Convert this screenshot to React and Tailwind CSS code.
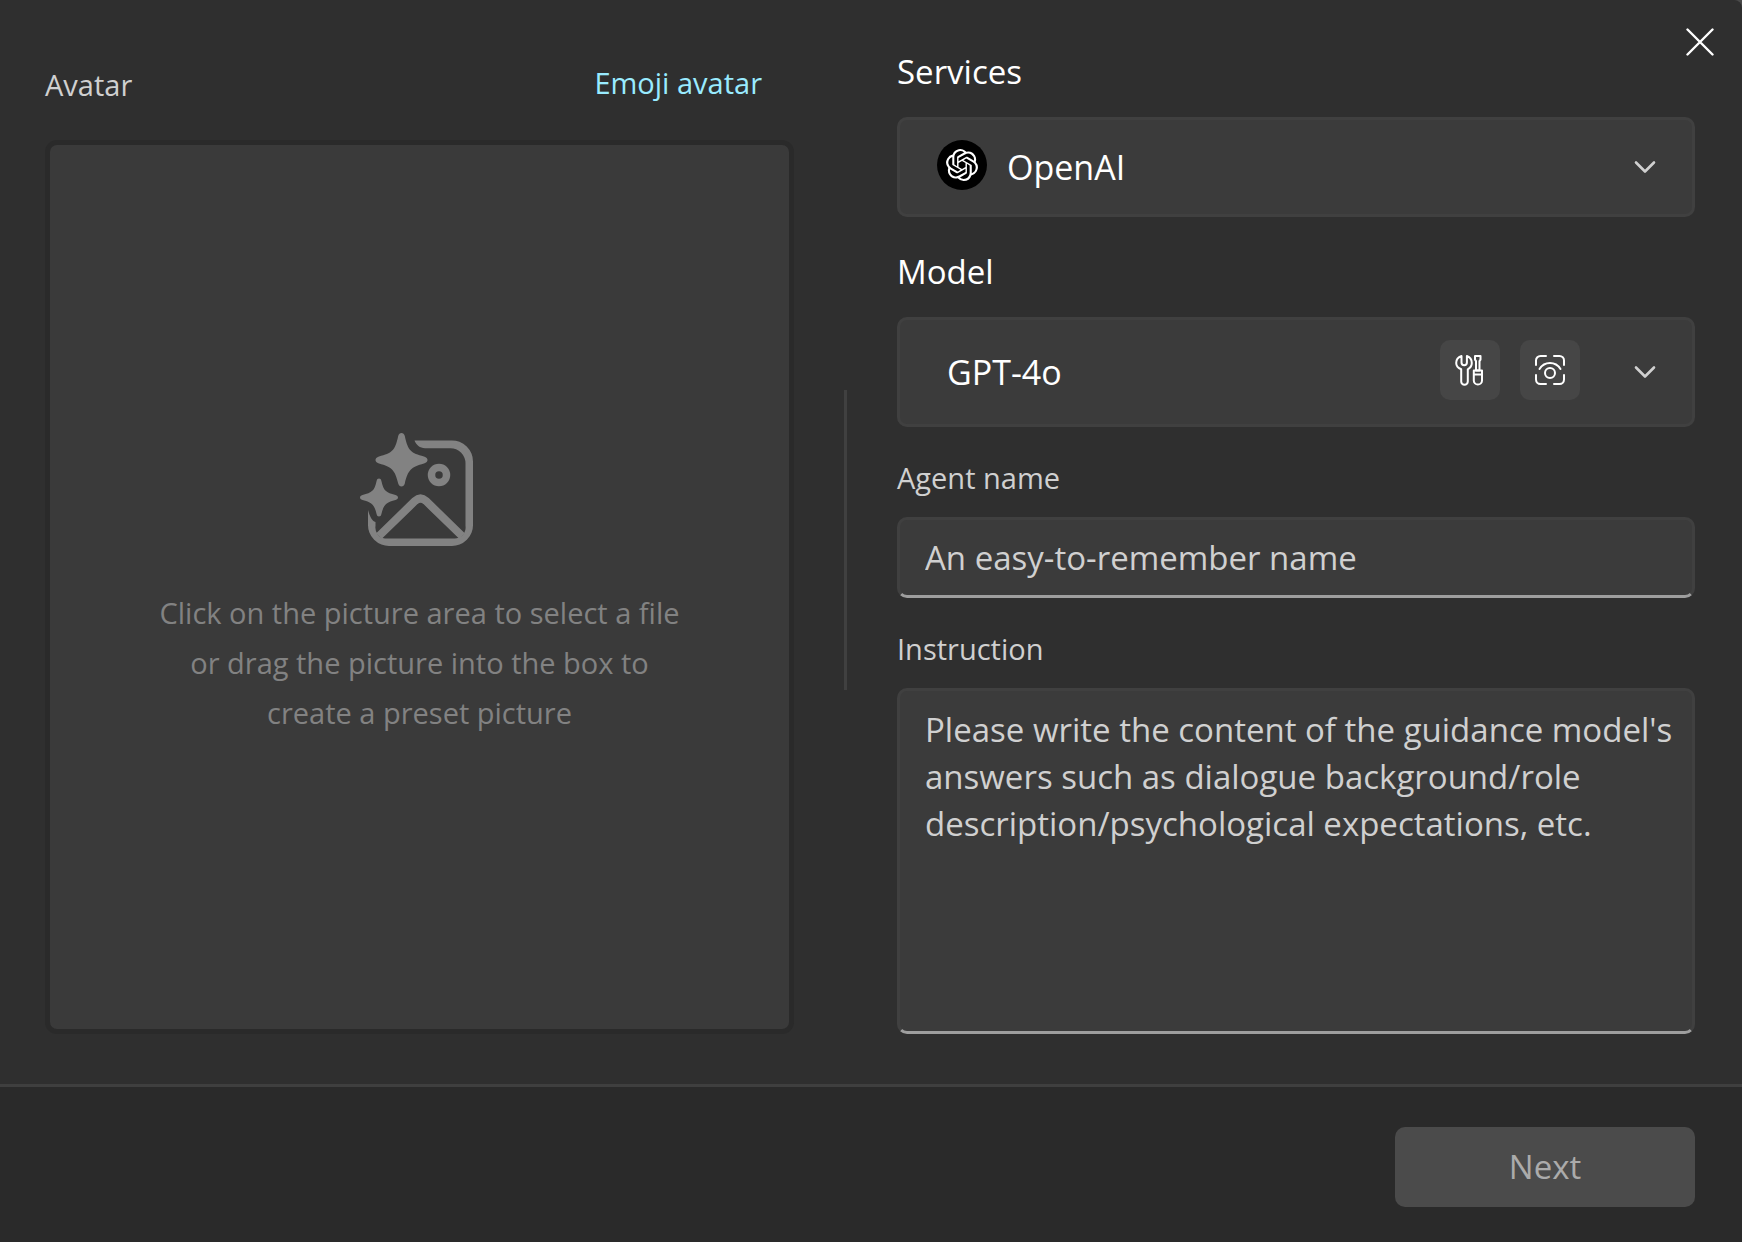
import { SiOpenai } from "react-icons/si";

const labelText = "text-[29px] leading-[38px] text-[#d0d0d0]";
const headText = "text-[33px] leading-12 text-white";
const panel = "rounded-[10px] border-3 border-[#404040] bg-[#3b3b3b]";

function Chevron() {
  return (
    <svg className="pointer-events-none h-5 w-6 shrink-0" viewBox="0 0 24 20" fill="none" stroke="#d0d0d0" strokeWidth="2.6" strokeLinecap="round" strokeLinejoin="round" aria-hidden="true">
      <path d="M3 5.5 12 14.5 21 5.5" />
    </svg>
  );
}

function ToolsIcon() {
  return (
    <svg className="size-8" viewBox="0 0 32 32" fill="none" stroke="#fff" strokeWidth="2" strokeLinejoin="round" aria-hidden="true">
      <path d="M7.500 2V8.500a2.700 2.700 0 0 0 5.400 0V2C15.900 3 17.800 5.600 17.800 9c0 3-1.600 5-4 6.300V27.500a3.300 3.300 0 0 1-6.600 0V15.300C4 14 2.200 11.800 2.200 9c0-3.400 2.200-6 5.300-7Z" />
      <path d="M21 2h5.500v3.600l-1 1.500v9.400h-3.500V7.100l-1-1.500Z" />
      <path d="M19.800 16.500h8.200v10a4.100 4.100 0 0 1-8.200 0ZM19.800 20.500h8.200" />
    </svg>
  );
}

function VisionIcon() {
  return (
    <svg className="size-8" viewBox="0 0 32 32" fill="none" stroke="#fff" strokeWidth="2" strokeLinecap="round" aria-hidden="true">
      <path d="M2 11V6.500a4.500 4.500 0 0 1 4.500-4.500H12M20 2h5.500a4.500 4.500 0 0 1 4.500 4.500V11M30 21v4.500a4.500 4.500 0 0 1-4.500 4.500H20M12 30H6.500a4.500 4.500 0 0 1-4.500-4.500V21" />
      <path d="M5.500 15C8 11 11.700 9 16 9s8 2 10.500 6" />
      <circle cx="16" cy="19" r="5" />
    </svg>
  );
}

function PictureIcon() {
  return (
    <svg className="mr-1 h-[116px] w-[116px]" viewBox="0 0 116 116" fill="none" aria-hidden="true">
      <path d="M54.500 8.500H91A21 21 0 0 1 113 30V92A21 21 0 0 1 91 114H30A21 21 0 0 1 8 92V78C10 85 12 89 15.500 90V94A11 11 0 0 0 25 106.500H94A11 11 0 0 0 105.500 94V32A15 15 0 0 0 90 16.300H65C60 16 56 13 54.500 8.500Z" fill="#828282" />
      <path d="M19 104 55 69Q60.500 64 66 69L102 104" stroke="#828282" strokeWidth="8" />
      <circle cx="79" cy="43" r="7.500" stroke="#828282" strokeWidth="7.500" />
      <path d="M41.500 1C43 1 44.300 2 44.800 4C48 19 51 21 64 24.500C66.500 25.200 67.500 26.500 67.500 28C67.500 29.500 66.500 30.800 64 31.500C51 35 48 38 44.800 51.500C44.300 53.500 43 54.500 41.500 54.500C40 54.500 38.700 53.500 38.200 51.500C35 38 32 35 19 31.500C16.500 30.800 15.500 29.500 15.500 28C15.500 26.500 16.500 25.200 19 24.500C32 21 35 19 38.200 4C38.700 2 40 1 41.500 1Z" fill="#828282" />
      <path d="M19 46.500C20.200 46.500 21 47.200 21.400 49C23.500 59 26 60.500 35.500 63C37.200 63.500 38 64.500 38 65.500C38 66.500 37.200 67.500 35.500 68C26 70.500 23.500 73 21.400 82C21 83.800 20.200 84.500 19 84.500C17.800 84.500 17 83.800 16.600 82C14.500 73 12 70.500 2.500 68C.8 67.500 0 66.500 0 65.500C0 64.500 .8 63.500 2.500 63C12 60.500 14.500 59 16.600 49C17 47.200 17.800 46.500 19 46.500Z" fill="#828282" />
    </svg>
  );
}

export default function App() {
  return (
    <div className="bg-[#4a4a4a] font-['Open_Sans','Noto_Sans',sans-serif]">
      <form className="relative flex min-h-screen flex-col overflow-hidden rounded-tr-lg bg-[#2f2f2f]">
        <button type="button" aria-label="Close" className="absolute top-6 right-6 flex size-9 items-center justify-center">
          <svg className="size-7" viewBox="0 0 28 28" stroke="#fff" strokeWidth="2.400" strokeLinecap="round" aria-hidden="true">
            <path d="M1.500 1.500 26.500 26.500M26.500 1.500 1.500 26.500" />
          </svg>
        </button>

        <main className="flex grow pr-[47px] pb-[50px] pl-[45px]">
          <section className="flex min-w-0 flex-[749] flex-col pt-16">
            <div className="flex items-start justify-between pr-8">
              <h2 className={`${labelText} pt-0.5`}>Avatar</h2>
              <a href="#emoji" className="text-[29px] leading-[38px] text-[#99ebff]">Emoji avatar</a>
            </div>
            <button type="button" className="mt-9 flex grow flex-col items-center justify-center rounded-xl border-5 border-[#2a2a2a] bg-[#3a3a3a] pb-1 text-[#828282]">
              <PictureIcon />
              <span className="mt-10 max-w-[540px] text-[29px] leading-[50px]">
                Click on the picture area to select a file or drag the picture into the box to create a preset picture
              </span>
            </button>
          </section>

          <div className="mx-[50px] mt-[390px] h-[300px] w-[3px] shrink-0 bg-[#404040]" />

          <section className="flex min-w-0 flex-[798] flex-col pt-12">
            <label htmlFor="service" className={headText}>Services</label>
            <div className={`${panel} mt-[21px] flex h-[100px] items-center pr-[35px] pl-[37px]`}>
              <span className="mb-1 flex size-[50px] shrink-0 items-center justify-center rounded-full bg-black text-white">
                <SiOpenai className="size-8" />
              </span>
              <select id="service" className="ml-5 h-full grow appearance-none bg-transparent text-[34px] text-white">
                <option>OpenAI</option>
              </select>
              <Chevron />
            </div>

            <label htmlFor="model" className={`${headText} mt-[31px]`}>Model</label>
            <div className={`${panel} mt-[21px] flex h-[110px] items-center pr-[35px] pl-[47px]`}>
              <select id="model" className="h-full grow appearance-none bg-transparent text-[34px] text-white">
                <option>GPT-4o</option>
              </select>
              <div className="mr-[53px] mb-1 flex gap-5">
                <span className="flex size-[60px] items-center justify-center rounded-[10px] bg-[#464646]"><ToolsIcon /></span>
                <span className="flex size-[60px] items-center justify-center rounded-[10px] bg-[#464646]"><VisionIcon /></span>
              </div>
              <Chevron />
            </div>

            <label htmlFor="agent" className={`${labelText} mt-8`}>Agent name</label>
            <input id="agent" placeholder="An easy-to-remember name" className={`${panel} mt-5 h-[81px] border-b-[#9e9e9e] px-[25px] text-[33px] text-white placeholder:text-[#d0d0d0]`} />

            <label htmlFor="instruction" className={`${labelText} mt-8`}>Instruction</label>
            <textarea id="instruction" placeholder="Please write the content of the guidance model's answers such as dialogue background/role description/psychological expectations, etc." className={`${panel} mt-5 min-h-[346px] grow resize-none border-b-[#9e9e9e] py-[15px] pr-2 pl-[25px] text-[33px] leading-[47px] text-white placeholder:text-[#d0d0d0]`} />
          </section>
        </main>

        <footer className="flex justify-end border-t-3 border-[#3f3f3f] bg-[#2a2a2a] pt-10 pr-[47px] pb-[35px]">
          <button type="submit" disabled className="h-20 w-[300px] rounded-[10px] bg-[#4b4b4b] text-[33px] text-[#ababab]">Next</button>
        </footer>
      </form>
    </div>
  );
}
